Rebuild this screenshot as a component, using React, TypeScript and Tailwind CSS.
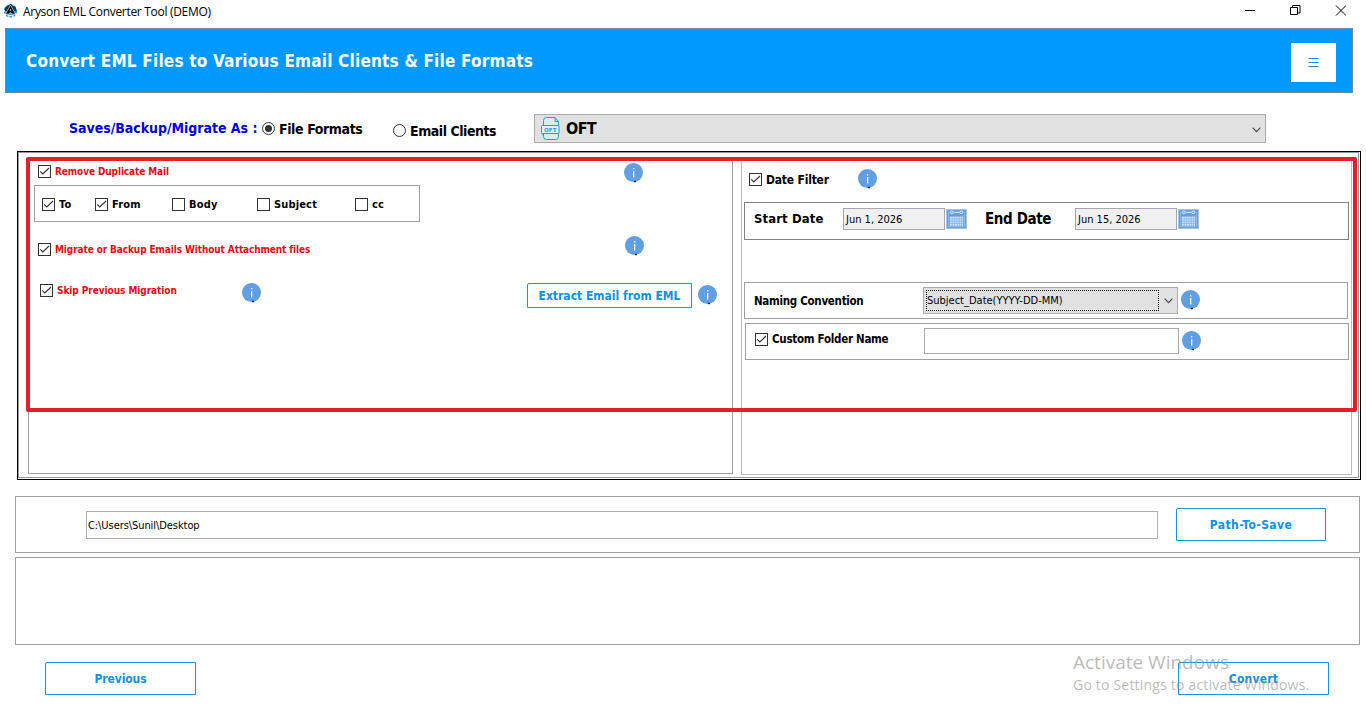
import type { ReactNode } from "react";

const cx = (...parts: (string | undefined)[]) => parts.filter(Boolean).join(" ");

function Info({ className }: { className?: string }) {
  return (
    <svg className={cx("h-5 w-5 shrink-0", className)} viewBox="0 0 20 20">
      <circle cx="9.5" cy="9.5" r="9.5" fill="#5f9fe2" />
      <rect x="9" y="5" width="1.3" height="1.5" fill="#fff" />
      <rect x="9" y="8" width="1.3" height="6.5" fill="#fff" />
      <rect x="10" y="17.8" width="2" height="1.4" fill="#10151c" />
    </svg>
  );
}

function Check({ checked, className }: { checked?: boolean; className?: string }) {
  return (
    <svg className={cx("h-[13px] w-[13px] shrink-0", className)} viewBox="0 0 13 13">
      <rect x=".5" y=".5" width="12" height="12" fill="#fff" stroke="#333" />
      {checked && <path d="M2.2 6.3 4.8 9 11 3" fill="none" stroke="#333" strokeWidth="1.1" />}
    </svg>
  );
}

function Radio({ checked, className }: { checked?: boolean; className?: string }) {
  return (
    <svg className={cx("h-[13px] w-[13px] shrink-0", className)} viewBox="0 0 13 13">
      <circle cx="6.5" cy="6.5" r="6" fill="#fff" stroke="#333" />
      {checked && <circle cx="6.5" cy="6.5" r="3.5" fill="#333" />}
    </svg>
  );
}

function Calendar() {
  return (
    <svg className="h-[20px] w-[21px] shrink-0" viewBox="0 0 22 21">
      <rect width="22" height="21" fill="#a5c4e8" />
      <rect x="1" y="1" width="20" height="19" fill="#659fdf" />
      <path d="M2.5 3.5h17v15h-17z" fill="none" stroke="#8ebbeb" />
      <path d="M8 3.5h6" stroke="#d6e8fa" />
      <circle cx="6" cy="3.5" r="1.4" fill="#659fdf" stroke="#e5f1fd" />
      <circle cx="16" cy="3.5" r="1.4" fill="#659fdf" stroke="#e5f1fd" />
      <rect x="4" y="8" width="14" height="9.5" fill="#d3e6fa" />
      <path d="M4 10.5h14M4 12.8h14M4 15.2h14M6.5 8v9.5M9 8v9.5M11.5 8v9.5M14 8v9.5M16.3 8v9.5" stroke="#77ace5" strokeWidth=".7" />
    </svg>
  );
}

function Chevron({ className }: { className?: string }) {
  return (
    <svg className={cx("h-[6px] w-[9px] shrink-0", className)} viewBox="0 0 9 6">
      <path d="M.6.7 4.5 4.6 8.4.7" fill="none" stroke="#444" strokeWidth="1.1" />
    </svg>
  );
}

function Logo() {
  return (
    <svg className="mt-[3px] ml-1 h-4 w-[13px] shrink-0" viewBox="0 0 13 16">
      <circle cx="6.5" cy="8" r="5.6" fill="#4fa3d2" stroke="#2f8fc7" strokeWidth="2" strokeDasharray="2.2 1.4" />
      <path d="M1 4.500 6.500.800 12 4.500V8H1z" fill="#123a5c" />
      <path d="M6.500 2.200 11.500 11H8.500L6.500 9.500 4.500 11h-3z" fill="#05080c" stroke="#e8f4fb" strokeWidth=".6" />
      <path d="M5.600 7.500 6.500 5.800l.9 1.700z" fill="#fff" />
      <path d="M3.500 12.500h6" stroke="#d5ebf6" />
    </svg>
  );
}

function OftIcon() {
  return (
    <svg className="mt-[2px] ml-[6px] h-[23px] w-[19px] shrink-0" viewBox="0 0 19 23">
      <path d="M2.5 8V3.5a3 3 0 0 1 3-3H14L17.5 4.500V8M14 .5v4h3.500M2.500 16.500v3a3 3 0 0 0 3 3h9a3 3 0 0 0 3-3v-3" fill="#d9edf8" stroke="#199fe0" />
      <rect x=".5" y="8.500" width="17.500" height="8" rx="1" fill="#e2f2fb" stroke="#199fe0" />
      <path d="M1 16.500 2.500 18.500" stroke="#199fe0" />
      <text x="9.300" y="14.600" textAnchor="middle" fontFamily="DejaVu Sans, sans-serif" fontSize="5.600" fontWeight="700" fill="#199fe0">OFT</text>
    </svg>
  );
}

function Button({ children, className }: { children: ReactNode; className?: string }) {
  return (
    <button className={cx("flex shrink-0 items-center justify-center rounded-tl-[2px] border border-[#1c95d8] bg-white font-bold whitespace-nowrap text-[#0d93e4] shadow-[0_0_2px_#c9f5ff]", className)}>
      {children}
    </button>
  );
}

const fields = [
  { label: "To", checked: true, width: "w-[53px]" },
  { label: "From", checked: true, width: "w-[77px]" },
  { label: "Body", checked: false, width: "w-[85px]" },
  { label: "Subject", checked: false, width: "w-[98px]" },
  { label: "cc", checked: false, width: "w-[50px]" },
];

export default function App() {
  return (
    <div className="relative flex h-[728px] w-[1366px] flex-col overflow-hidden bg-white font-['DejaVu_Sans_Condensed','DejaVu_Sans',sans-serif] leading-none whitespace-nowrap text-black">
      <header className="flex h-7 shrink-0 items-start">
        <Logo />
        <h1 className="mt-[5px] ml-[6px] font-['Open_Sans',sans-serif] text-[12px] leading-[14px] tracking-[-0.3px]">Aryson EML Converter Tool (DEMO)</h1>
        <svg className="mt-1 mr-5 ml-auto h-3 w-[101px] shrink-0" viewBox="0 0 101 12" fill="none" stroke="#000">
          <path d="M0 6.500h10M45.500 3.500h7v7h-7zM47.500 3v-1.500h7.500v7.500h-2" />
          <path d="M91 1.500 101 11.500M101 1.500 91 11.500" />
        </svg>
      </header>

      <section className="ml-[5px] flex h-[65px] w-[1348px] shrink-0 items-center justify-between border border-[#648ba8] bg-[#0099ff] pr-4 pl-5">
        <h2 className="pt-[2px] text-[17px] font-bold tracking-[0.2px] text-white">Convert EML Files to Various Email Clients &amp; File Formats</h2>
        <div className="mt-[3px] flex h-[39px] w-[45px] items-center justify-center bg-white">
          <svg className="h-[9px] w-[11px]" viewBox="0 0 11 9" stroke="#1390d8">
            <path d="M.5.500h10M.5 4.500h10M.5 8.500h10" />
          </svg>
        </div>
      </section>

      <section className="flex h-[58px] shrink-0 items-start pl-[69px] text-[14px] font-bold">
        <span className="mt-7 w-[193px] shrink-0 tracking-[-0.03px] text-[#0000dd]">Saves/Backup/Migrate As :</span>
        <label className="mt-[29px] flex w-[131px] shrink-0 gap-1 tracking-[-0.4px]"><Radio checked />File Formats</label>
        <label className="mt-[31px] flex w-[141px] shrink-0 gap-1 tracking-[-0.47px]"><Radio />Email Clients</label>
        <div className="mt-[21px] flex h-[29px] w-[732px] shrink-0 items-start border border-[#adadad] bg-[#e1e1e1]">
          <OftIcon />
          <span className="mt-[5px] ml-[6px] text-[16px] leading-[18px] tracking-[-0.6px]">OFT</span>
          <Chevron className="mt-[12px] mr-1 ml-auto" />
        </div>
      </section>

      <main className="ml-[17px] h-[329px] w-[1344px] shrink-0 border border-black pr-px pb-px">
        <div className="flex h-[326px] w-[1341px] items-start border border-[#999] pt-1">
          <section className="ml-[9px] h-[317px] w-[705px] shrink-0 border border-[#a0a0a0] text-[11px] font-bold">
            <div className="flex h-[27px] items-start pl-[9px]">
              <Check checked className="mt-[7px]" />
              <span className="mt-[9px] ml-[4px] w-[569px] text-[10px] tracking-[-0.11px] text-[#ea0a14]">Remove Duplicate Mail</span>
              <Info className="mt-[5px]" />
            </div>
            <div className="ml-[5px] flex h-[37px] w-[386px] items-start border border-[#a0a0a0] pt-3 pl-[7px]">
              {fields.map((f) => (
                <label key={f.label} className={cx("flex shrink-0 items-start gap-1", f.width)}>
                  <Check checked={f.checked} />
                  <span className="pt-px tracking-[0.15px]">{f.label}</span>
                </label>
              ))}
            </div>
            <div className="flex h-[47px] items-start pl-[9px]">
              <Check checked className="mt-[21px]" />
              <span className="mt-[23px] ml-[4px] w-[570px] text-[10px] tracking-[-0.11px] text-[#ea0a14]">Migrate or Backup Emails Without Attachment files</span>
              <Info className="mt-[14px]" />
            </div>
            <div className="flex h-[60px] items-start pl-[11px]">
              <Check checked className="mt-[15px]" />
              <span className="mt-[17px] ml-[4px] w-[185px] text-[10px] tracking-[-0.06px] text-[#ea0a14]">Skip Previous Migration</span>
              <Info className="mt-[14px]" />
              <Button className="mt-[14px] ml-[265px] h-[25px] w-[165px] text-[12px]">Extract Email from EML</Button>
              <Info className="mt-[16px] ml-[6px]" />
            </div>
          </section>

          <section className="ml-2 h-[318px] w-[611px] shrink-0 border border-[#bdbdbd] text-[12px] font-bold">
            <div className="flex h-[44px] items-start pl-[7px]">
              <Check checked className="mt-[15px]" />
              <span className="mt-[16px] ml-1 w-[92px] tracking-[-0.2px]">Date Filter</span>
              <Info className="mt-[11px]" />
            </div>
            <div className="ml-[2px] flex h-[38px] w-[605px] items-start border border-[#828282] pl-[9px] text-[13px]">
              <span className="mt-[9px] w-[89px] shrink-0 tracking-[0.1px]">Start Date</span>
              <span className="mt-[5px] h-[22px] w-[102px] shrink-0 border border-[#a6a6b0] bg-[#f0f0f0] pt-[5px] pl-[2px] text-[11px] font-normal">Jun 1, 2026</span>
              <div className="mt-[6px] ml-px w-[39px] shrink-0"><Calendar /></div>
              <span className="mt-[9px] w-[90px] shrink-0 text-[15px] tracking-[-0.37px]">End Date</span>
              <span className="mt-[5px] h-[22px] w-[102px] shrink-0 border border-[#a6a6b0] bg-[#f0f0f0] pt-[5px] pl-[2px] text-[11px] font-normal">Jun 15, 2026</span>
              <div className="mt-[6px] ml-px"><Calendar /></div>
            </div>
            <div className="mt-[42px] ml-[2px] flex h-[37px] w-[604px] items-start border border-[#a0a0a0] pl-[9px]">
              <span className="mt-[13px] w-[169px] shrink-0 text-[11.500px] tracking-[-0.3px]">Naming Convention</span>
              <div className="mt-1 flex h-[27px] w-[255px] shrink-0 items-center border border-[#adadad] bg-[#e1e1e1] pl-[2px]">
                <span className="h-[21px] w-[233px] border border-dotted border-black pt-[4px] text-[11px] font-normal">Subject_Date(YYYY-DD-MM)</span>
                <Chevron className="ml-[5px]" />
              </div>
              <Info className="mt-[7px] ml-[3px]" />
            </div>
            <div className="mt-1 ml-[3px] flex h-[37px] w-[604px] items-start border border-[#a0a0a0] pl-[9px]">
              <Check checked className="mt-[9px]" />
              <span className="mt-[10px] ml-1 w-[152px] shrink-0 text-[11.500px] tracking-[-0.28px]">Custom Folder Name</span>
              <div className="mt-1 h-[26px] w-[255px] shrink-0 border border-[#ababab]" />
              <Info className="mt-[7px] ml-[3px]" />
            </div>
          </section>
        </div>
      </main>

      <section className="mt-4 ml-[15px] flex h-[57px] w-[1345px] shrink-0 items-start border border-[#a0a0a0] pl-[70px]">
        <div className="mt-[14px] h-[28px] w-[1072px] shrink-0 border border-[#abadb3] pt-[8px] pl-px text-[11px] tracking-[-0.07px]">C:\Users\Sunil\Desktop</div>
        <Button className="mt-[11px] ml-[18px] h-[33px] w-[150px] text-[12px] tracking-[0.4px]">Path-To-Save</Button>
      </section>
      <section className="mt-1 ml-[15px] h-[88px] w-[1345px] shrink-0 border border-[#a0a0a0]" />
      <footer className="mt-[17px] flex pr-[37px] pl-[45px] text-[12px]">
        <Button className="h-[33px] w-[151px] tracking-[-0.1px]">Previous</Button>
        <Button className="ml-auto h-[33px] w-[151px] tracking-[0.2px]">Convert</Button>
      </footer>

      <div className="pointer-events-none absolute top-[157px] left-[26px] h-[255px] w-[1331px] rounded-[2px] border-4 border-[#e3202a]" />
      <div className="pointer-events-none absolute top-[651px] left-[1073px] font-['Open_Sans',sans-serif] text-[#8c8c8c]/60">
        <div className="text-[19px] leading-[22px]">Activate Windows</div>
        <div className="mt-[2px] text-[14px] leading-[20px] tracking-[0.2px]">Go to Settings to activate Windows.</div>
      </div>
    </div>
  );
}
